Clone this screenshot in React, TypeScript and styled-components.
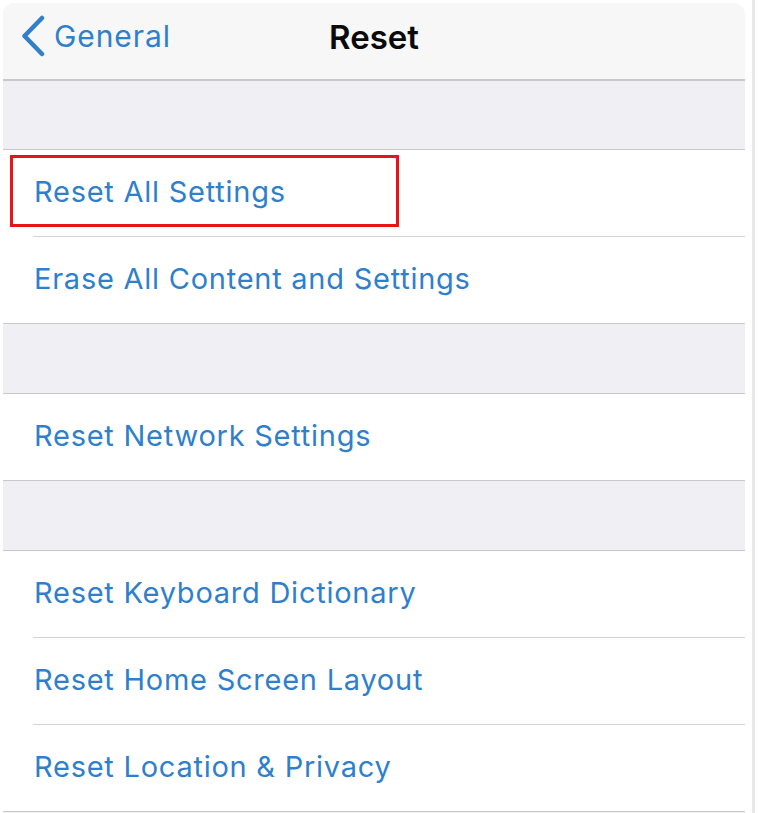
import React from "react";
import styled, { createGlobalStyle } from "styled-components";

const Global = createGlobalStyle`
  html, body { margin: 0; padding: 0; background: #ffffff; }
  body { font-family: Inter, "Liberation Sans", Arial, sans-serif; }
`;

const Page = styled.div`
  display: flex;
  align-items: stretch;
  width: 758px;
  height: 813px;
  padding: 3px 0 0 3px;
  box-sizing: border-box;
  overflow: hidden;
`;

const Panel = styled.div`
  width: 742px;
  display: flex;
  flex-direction: column;
  background: #efeff4;
  border-radius: 12px 12px 0 0;
  overflow: hidden;
`;

const RightRule = styled.div`
  width: 3px;
  margin-left: 7px;
  margin-top: -3px;
  background: #e8e8eb;
`;

const NavBar = styled.div`
  position: relative;
  height: 78px;
  flex: none;
  display: flex;
  align-items: flex-start;
  padding-top: 12px;
  box-sizing: border-box;
  background: #f7f7f8;
  border-bottom: 2px solid #c9c9cd;
`;

const BackButton = styled.div`
  display: flex;
  align-items: center;
  height: 41px;
  gap: 8px;
  padding-left: 17px;
  color: #2f7fcc;
  font-size: 30px;
  line-height: 30px;
  letter-spacing: 0.9px;
`;

const Title = styled.div`
  position: absolute;
  left: 0;
  right: 0;
  top: 18px;
  text-align: center;
  font-size: 33px;
  line-height: 33px;
  font-weight: 600;
  color: #0a0a0a;
  pointer-events: none;
`;

const Spacer = styled.div<{ $h: number }>`
  height: ${(p) => p.$h}px;
  flex: none;
  background: #efeff4;
  border-bottom: 1px solid #c9c9cd;
`;

const Group = styled.div`
  background: #ffffff;
  border-bottom: 1px solid #c9c9cd;
  flex: none;
`;

const Row = styled.div<{ $last?: boolean }>`
  position: relative;
  height: 86px;
  display: flex;
  align-items: center;
  border-bottom: ${(p) => (p.$last ? "none" : "1px solid #d3d3d6")};
  margin-left: ${(p) => (p.$last ? "0" : "30px")};
  padding-left: ${(p) => (p.$last ? "31px" : "1px")};
`;

const RowText = styled.span`
  font-size: 29px;
  letter-spacing: 0.75px;
  color: #2f7fcc;
  padding-bottom: 3px;
`;

const Highlight = styled.div`
  position: absolute;
  left: -23px;
  top: 5px;
  width: 389px;
  height: 72px;
  border: 3px solid #e8141c;
  box-sizing: border-box;
  pointer-events: none;
`;

const Chevron = () => (
  <svg width="26" height="42" viewBox="0 0 26 42" fill="none">
    <path
      d="M22 3 L4.5 21 L22 39"
      stroke="#2f7fcc"
      strokeWidth="4.5"
      strokeLinecap="round"
      strokeLinejoin="round"
    />
  </svg>
);

type Item = { label: string; highlight?: boolean };

const groups: Item[][] = [
  [{ label: "Reset All Settings", highlight: true }, { label: "Erase All Content and Settings" }],
  [{ label: "Reset Network Settings" }],
  [
    { label: "Reset Keyboard Dictionary" },
    { label: "Reset Home Screen Layout" },
    { label: "Reset Location & Privacy" },
  ],
];

export default function App() {
  return (
    <>
      <Global />
      <Page>
        <Panel>
          <NavBar>
            <BackButton>
              <Chevron />
              <span>General</span>
            </BackButton>
            <Title>Reset</Title>
          </NavBar>
          {groups.map((g, gi) => (
            <React.Fragment key={gi}>
              <Spacer $h={gi === 0 ? 68 : 69} />
              <Group>
                {g.map((item, i) => (
                  <Row key={item.label} $last={i === g.length - 1}>
                    {item.highlight && <Highlight />}
                    <RowText>{item.label}</RowText>
                  </Row>
                ))}
              </Group>
            </React.Fragment>
          ))}
        </Panel>
        <RightRule />
      </Page>
    </>
  );
}
